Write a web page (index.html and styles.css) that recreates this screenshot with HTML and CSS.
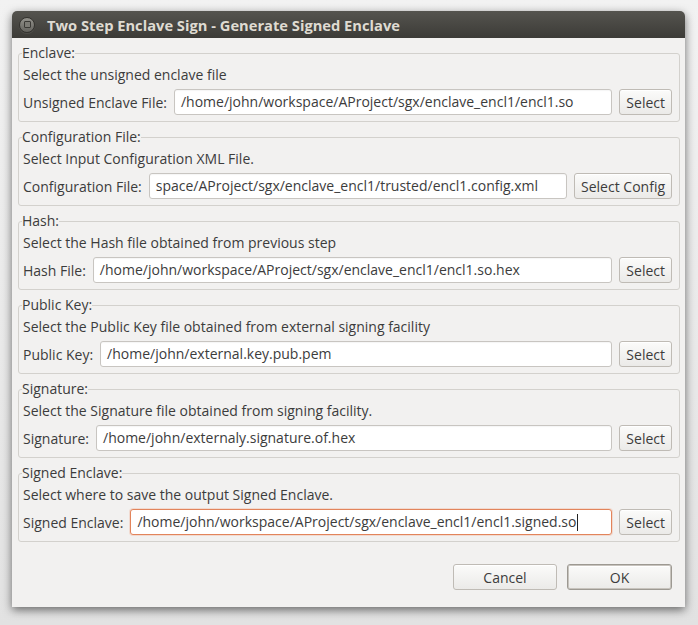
FILE: index.html
```html
<!DOCTYPE html>
<html>
<head>
<meta charset="utf-8">
<link rel="stylesheet" href="styles.css">
</head>
<body>
<div class="window">
  <div class="titlebar">
    <span class="close"><span class="close-box"></span></span>
    <span class="title">Two Step Enclave Sign - Generate Signed Enclave</span>
  </div>
  <div class="content">
    <fieldset class="group">
      <legend>Enclave:</legend>
      <div class="desc">Select the unsigned enclave file</div>
      <div class="row">
        <span class="label">Unsigned Enclave File:</span>
        <div class="input">/home/john/workspace/AProject/sgx/enclave_encl1/encl1.so</div>
        <button class="btn">Select</button>
      </div>
    </fieldset>
    <fieldset class="group">
      <legend>Configuration File:</legend>
      <div class="desc">Select Input Configuration XML File.</div>
      <div class="row">
        <span class="label">Configuration File:</span>
        <div class="input">space/AProject/sgx/enclave_encl1/trusted/encl1.config.xml</div>
        <button class="btn">Select Config</button>
      </div>
    </fieldset>
    <fieldset class="group">
      <legend>Hash:</legend>
      <div class="desc">Select the Hash file obtained from previous step</div>
      <div class="row">
        <span class="label">Hash File:</span>
        <div class="input">/home/john/workspace/AProject/sgx/enclave_encl1/encl1.so.hex</div>
        <button class="btn">Select</button>
      </div>
    </fieldset>
    <fieldset class="group">
      <legend>Public Key:</legend>
      <div class="desc">Select the Public Key file obtained from external signing facility</div>
      <div class="row">
        <span class="label">Public Key:</span>
        <div class="input">/home/john/external.key.pub.pem</div>
        <button class="btn">Select</button>
      </div>
    </fieldset>
    <fieldset class="group">
      <legend>Signature:</legend>
      <div class="desc">Select the Signature file obtained from signing facility.</div>
      <div class="row">
        <span class="label">Signature:</span>
        <div class="input">/home/john/externaly.signature.of.hex</div>
        <button class="btn">Select</button>
      </div>
    </fieldset>
    <fieldset class="group">
      <legend>Signed Enclave:</legend>
      <div class="desc">Select where to save the output Signed Enclave.</div>
      <div class="row">
        <span class="label">Signed Enclave:</span>
        <div class="input focused">/home/john/workspace/AProject/sgx/enclave_encl1/encl1.signed.so<span class="caret"></span></div>
        <button class="btn">Select</button>
      </div>
    </fieldset>
    <div class="actions">
      <button class="btn action">Cancel</button>
      <button class="btn action default">OK</button>
    </div>
  </div>
</div>
</body>
</html>
```

FILE: styles.css
```css
html, body {
  margin: 0;
  padding: 0;
}
body {
  width: 698px;
  height: 625px;
  overflow: hidden;
  background: linear-gradient(#f2f2f2, #e2e2e2);
  font-family: "Open Sans", "DejaVu Sans", sans-serif;
  font-size: 14px;
  color: #3c3c3c;
}
.window {
  margin: 11px 0 0 12px;
  width: 673px;
  height: 596px;
  background: #f2f1f0;
  border-radius: 5px 5px 0 0;
  box-shadow: 0 3px 10px rgba(0, 0, 0, 0.55);
  display: flex;
  flex-direction: column;
}
.titlebar {
  height: 27px;
  flex: none;
  background: linear-gradient(#55544f, #3c3b37);
  border-radius: 5px 5px 0 0;
  display: flex;
  align-items: center;
  padding-left: 7px;
}
.close {
  width: 14px;
  height: 14px;
  border-radius: 50%;
  background: linear-gradient(#92918b, #64635e);
  border: 1px solid #34332f;
  display: flex;
  align-items: center;
  justify-content: center;
  box-shadow: 0 1px 0 rgba(255,255,255,0.08);
}
.close-box {
  width: 5px;
  height: 5px;
  border: 1px solid #3a3935;
  border-radius: 1px;
  background: #7c7b75;
}
.title {
  margin-left: 12px;
  font-weight: bold;
  color: #dfdbd2;
  font-size: 14.7px;
}
.content {
  flex: 1;
  padding: 7px 5px 0 6px;
  display: flex;
  flex-direction: column;
}
.group {
  margin: 0 0 7px 0;
  padding: 0 7px 6px 4px;
  border: 1px solid #d3d1cd;
  border-radius: 3px;
  min-width: 0;
}
.group legend {
  padding: 0;
  margin-left: -1px;
  line-height: 16px;
}
.desc {
  margin-top: 4px;
  line-height: 20px;
}
.row {
  margin-top: 4px;
  display: flex;
  align-items: center;
  gap: 7px;
}
.label {
  white-space: nowrap;
}
.input {
  flex: 1;
  min-width: 0;
  height: 24px;
  line-height: 24px;
  border: 1px solid #c8c5c1;
  border-radius: 3px;
  background: #ffffff;
  padding: 0 6px;
  white-space: nowrap;
  overflow: hidden;
  box-shadow: inset 0 1px 1px rgba(0,0,0,0.04);
}
.input.focused {
  border-color: #e2845b;
  box-shadow: 0 0 0 1px rgba(240, 150, 110, 0.25);
}
.caret {
  display: inline-block;
  width: 1px;
  height: 17px;
  background: #222;
  vertical-align: -4px;
  margin-left: 1px;
}
.btn {
  font: inherit;
  color: inherit;
  height: 26px;
  padding: 0 6px;
  border: 1px solid #bfbbb5;
  border-radius: 3px;
  background: linear-gradient(#fbfbfa, #ebeae8);
  box-shadow: inset 0 1px 0 #ffffff;
  white-space: nowrap;
}
.actions {
  margin-top: 15px;
  display: flex;
  justify-content: flex-end;
  gap: 10px;
  padding-right: 8px;
}
.action {
  width: 104px;
}
.action.default {
  width: 105px;
  border-color: #9d9992;
  box-shadow: inset 0 0 0 1px #c7c3bd, inset 0 2px 0 #ffffff;
}
```
